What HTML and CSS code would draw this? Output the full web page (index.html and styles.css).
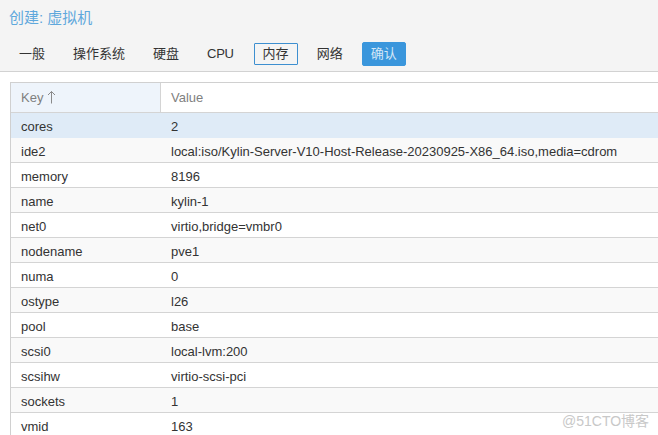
FILE: index.html
```html
<!DOCTYPE html>
<html lang="zh">
<head>
<meta charset="utf-8">
<title>创建: 虚拟机</title>
<link rel="stylesheet" href="styles.css">
</head>
<body>
<div class="header">
  <div class="title">创建: 虚拟机</div>
  <div class="tabs">
    <span class="tab">一般</span>
    <span class="tab">操作系统</span>
    <span class="tab">硬盘</span>
    <span class="tab latin">CPU</span>
    <span class="tab active">内存</span>
    <span class="tab">网络</span>
    <span class="tab confirm">确认</span>
  </div>
</div>
<div class="content">
  <div class="grid">
    <div class="row head">
      <div class="cell key">Key <svg class="arrow" width="9" height="14" viewBox="0 0 9 14"><path d="M4.5 1.5V13.5M1 5L4.5 1.5L8 5" fill="none" stroke="#8a8a8a" stroke-width="1"/></svg></div>
      <div class="cell val">Value</div>
    </div>
    <div class="row sel"><div class="cell key">cores</div><div class="cell val">2</div></div>
    <div class="row alt"><div class="cell key">ide2</div><div class="cell val">local:iso/Kylin-Server-V10-Host-Release-20230925-X86_64.iso,media=cdrom</div></div>
    <div class="row"><div class="cell key">memory</div><div class="cell val">8196</div></div>
    <div class="row alt"><div class="cell key">name</div><div class="cell val">kylin-1</div></div>
    <div class="row"><div class="cell key">net0</div><div class="cell val">virtio,bridge=vmbr0</div></div>
    <div class="row alt"><div class="cell key">nodename</div><div class="cell val">pve1</div></div>
    <div class="row"><div class="cell key">numa</div><div class="cell val">0</div></div>
    <div class="row alt"><div class="cell key">ostype</div><div class="cell val">l26</div></div>
    <div class="row"><div class="cell key">pool</div><div class="cell val">base</div></div>
    <div class="row alt"><div class="cell key">scsi0</div><div class="cell val">local-lvm:200</div></div>
    <div class="row"><div class="cell key">scsihw</div><div class="cell val">virtio-scsi-pci</div></div>
    <div class="row alt"><div class="cell key">sockets</div><div class="cell val">1</div></div>
    <div class="row"><div class="cell key">vmid</div><div class="cell val">163</div></div>
  </div>
</div>
<div class="watermark">@51CTO博客</div>
</body>
</html>
```
FILE: styles.css
```css
html, body {
  margin: 0;
  padding: 0;
  background: #ffffff;
  overflow: hidden;
  font-family: "Liberation Sans", "Noto Sans CJK SC", sans-serif;
  font-size: 13px;
  color: #333333;
}

.header {
  background: #f4f4f4;
  height: 71px;
  border-bottom: 1px solid #d2d2d2;
}

.title {
  padding: 7px 0 0 9px;
  height: 21px;
  line-height: 21px;
  font-size: 15px;
  color: #5fa8dc;
}

.tabs {
  display: flex;
  align-items: center;
  gap: 10px;
  padding: 14px 0 0 10px;
}

.tab {
  display: block;
  padding: 0 8px;
  border: 1px solid transparent;
  border-radius: 1px;
  height: 20px;
  line-height: 20px;
  color: #333333;
  font-size: 13px;
}

.tab.latin {
  letter-spacing: -0.3px;
  margin-right: 1px;
}

.tab.active {
  border-color: #3d8fd0;
}

.tab.confirm {
  background: #3a96dc;
  border-color: #3a96dc;
  color: #d3e7f7;
  height: 22px;
  line-height: 22px;
  border-radius: 2px;
}

.content {
  padding: 10px 0 0 10px;
}

.grid {
  width: 700px;
  border-left: 1px solid #d0d0d0;
  border-top: 1px solid #d0d0d0;
}

.row {
  display: flex;
  height: 24px;
  border-bottom: 1px solid #d4d4d4;
}

.row .cell {
  padding-top: 4px;
  line-height: 20px;
}

.row.head {
  height: 29px;
  background: #ffffff;
  color: #7f7f7f;
}

.row.head .cell {
  padding-top: 0;
  line-height: 29px;
}

.row.head .key {
  background: #eef4fb;
  border-right: 1px solid #d4d4d4;
  width: 139px;
}

.row.alt {
  background: #f9f9f9;
}

.row.sel {
  background: #dfebf7;
  border-bottom-color: #dfebf7;
}

.cell {
  padding-left: 10px;
  white-space: nowrap;
}

.key {
  width: 140px;
  flex: none;
}

.val {
  flex: 1;
}

.arrow {
  vertical-align: -2px;
}

.watermark {
  position: absolute;
  left: 562px;
  top: 410px;
  font-size: 14px;
  color: #c8c8c8;
}
```
